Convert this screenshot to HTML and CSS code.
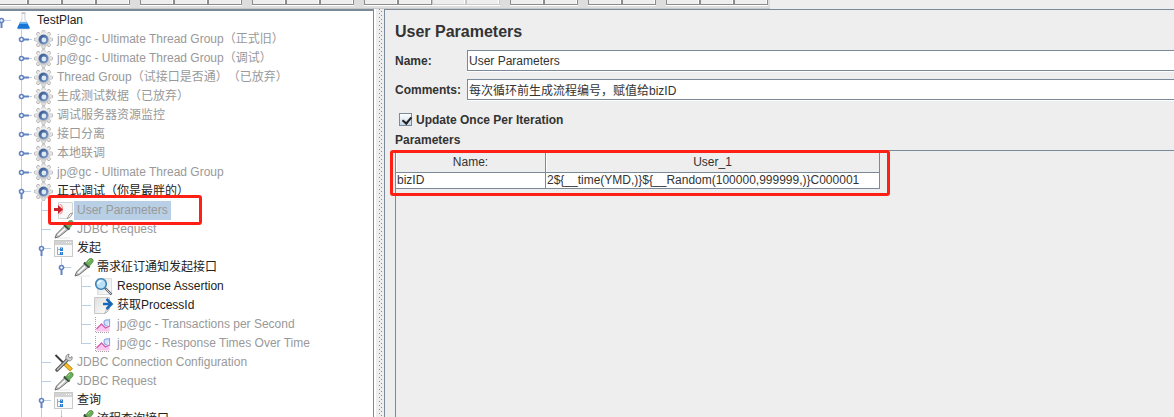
FILE: index.html
```html
<!DOCTYPE html>
<html lang="zh-CN">
<head>
  <meta charset="UTF-8">
  <meta name="viewport" content="width=device-width, initial-scale=1.0">
  <title>User Parameters</title>
  <link rel="stylesheet" href="styles.css">
</head>
<body>
  <!-- icon set -->
  <svg class="sprite" width="0" height="0">
    <defs>
      <linearGradient id="metal" x1="0" y1="0" x2="0" y2="1">
        <stop offset="0" stop-color="#f2f2f2"/><stop offset="1" stop-color="#cccccc"/>
      </linearGradient>
      <linearGradient id="paper" x1="0" y1="0" x2="1" y2="1">
        <stop offset="0" stop-color="#dedede"/><stop offset="1" stop-color="#ffffff"/>
      </linearGradient>
      <linearGradient id="hub" x1="0" y1="0" x2="1" y2="1">
        <stop offset="0" stop-color="#2f528c"/><stop offset="1" stop-color="#7fa0cb"/>
      </linearGradient>
    </defs>
    <symbol id="closed" viewBox="0 0 16 19">
      <path d="M10 9.5h4" stroke="#b8cfe5"/>
      <path d="M6 9.5h5" stroke="#6382bf" stroke-width="2"/>
      <circle cx="3.5" cy="9.5" r="2" fill="#fff" stroke="#6382bf" stroke-width="1.6"/>
    </symbol>
    <symbol id="opened" viewBox="0 0 16 19">
      <path d="M6 9.5h7" stroke="#b8cfe5"/>
      <path d="M3.5 12v5" stroke="#6382bf" stroke-width="2"/>
      <circle cx="3.5" cy="9.5" r="2" fill="#fff" stroke="#6382bf" stroke-width="1.6"/>
    </symbol>
    <symbol id="leaf" viewBox="0 0 16 19">
      <path d="M3 9.5h10" stroke="#b8cfe5"/>
    </symbol>
    <symbol id="flask" viewBox="0 0 20 19">
      <path d="M8 2v6L3.500 16.500q-.5 1.500 1 1.500h10q1.500 0 1-1.500L11 8V2z" fill="#edf1f5" stroke="#c6cbd0" stroke-width=".8"/>
      <path d="M6 11.500h7l2.500 5q.3 1.300-.7 1.300H4.200q-1 0-.7-1.300z" fill="#1675d8"/>
      <path d="M6 11.500h7l.7 1.500H5.300z" fill="#62b2f2"/>
      <path d="M9.200 3v7" stroke="#fff" stroke-width="1.200"/>
      <path d="M7.500 2h4" stroke="#aeb4ba"/>
    </symbol>
    <symbol id="gear" viewBox="0 0 20 19">
      <g stroke="#a6a6a6" stroke-width="4" stroke-linecap="round">
        <path d="M9.500 2v15M2 9.500h15M4.200 4.200l10.600 10.600M14.800 4.200L4.200 14.800"/>
      </g>
      <g stroke="#e6e6e6" stroke-width="2.800" stroke-linecap="round">
        <path d="M9.500 2v15M2 9.500h15M4.200 4.200l10.600 10.600M14.800 4.200L4.200 14.800"/>
      </g>
      <circle cx="9.500" cy="9.500" r="7" fill="url(#metal)"/>
      <circle cx="9.500" cy="9.500" r="5.300" fill="#a9b4c4"/>
      <circle cx="9.500" cy="9.500" r="4.700" fill="url(#hub)"/>
      <circle cx="9.900" cy="10" r="2.400" fill="#dfe9f5"/>
    </symbol>
    <symbol id="param" viewBox="0 0 20 19">
      <path d="M4.500 1.500h14v11l-5 5h-9z" fill="#f8f8f8" stroke="#d4d4d4"/>
      <path d="M18.500 12q-3 .5-3.500 2t-2 3.500q4-.5 5.500-5.500z" fill="#eee" stroke="#888" stroke-width=".8"/>
      <path d="M5.500 3.500q3 0 3 4.500t-3 5" fill="none" stroke="#ef9c9c" stroke-width="1.200"/>
      <path d="M0 7h4V4l5 4.500L4 13v-3H0z" fill="#c9232b"/>
    </symbol>
    <symbol id="dropper" viewBox="0 0 20 19">
      <path d="M3 18h13" stroke="#e6e6e6"/>
      <path d="M10.500 6l3.500 3.500-8.500 7-4.500 1.500 1.500-4z" fill="#c4cac7" stroke="#6c6c6c"/>
      <path d="M4 15l7-6.500" stroke="#fff" stroke-width="1.400"/>
      <path d="M10 4.500l5.500 5" stroke="#35453a" stroke-width="2.200"/>
      <path d="M11.500 5l3.500-4q2-1.500 3.500 0t0 3.500L15 8.500z" fill="#6aad5a" stroke="#4d8743" stroke-width=".7"/>
      <path d="M14 4l2-2" stroke="#a4d494"/>
    </symbol>
    <symbol id="controller" viewBox="0 0 20 19">
      <rect x=".5" y="1.500" width="18" height="16" fill="#fafafa" stroke="#c9c9c9"/>
      <path d="M1 2h17v4H1z" fill="#d2d2d2"/>
      <path d="M12 3.500h1m1 0h1m1 0h1" stroke="#fff"/>
      <path d="M3.500 8v7.500h3M3.500 10.500h3" fill="none" stroke="#9aa7b8"/>
      <path d="M6 8.500h3v3.500H6zM6 13h3v3H6z" fill="#2c7dd0"/>
      <path d="M7 9h1v1H7zm0 4.500h1v1H7z" fill="#9dd0f5"/>
    </symbol>
    <symbol id="lens" viewBox="0 0 20 19">
      <path d="M3.500 1.500h14v16h-14z" fill="url(#paper)" stroke="#ddd"/>
      <path d="M11 11l6.500 6.500" stroke="#5c656e" stroke-width="2.400"/>
      <path d="M12 12l5 5" stroke="#d0d4d8"/>
      <circle cx="7" cy="7" r="5.300" fill="#b8e0f7" stroke="#3a82b5" stroke-width="1.600"/>
      <path d="M4 7q.5-3 3.500-3" fill="none" stroke="#fff" stroke-width="1.500"/>
    </symbol>
    <symbol id="extract" viewBox="0 0 20 19">
      <path d="M.5 1.500h15v11l-5 5H.5z" fill="url(#paper)" stroke="#c8c8c8"/>
      <path d="M15 12q-3 .5-3 2t-1.500 3.500q3-1 4.500-4z" fill="#eee" stroke="#999" stroke-width=".7"/>
      <path d="M9 8h8M12.500 3l5 5-5 5" fill="none" stroke="#1768b8" stroke-width="2.600"/>
    </symbol>
    <symbol id="chart" viewBox="0 0 20 19">
      <path d="M1.500 2v15.500H16" fill="none" stroke="#a5a5a5" stroke-dasharray="1 1"/>
      <path d="M2.500 16.500V14l5-5 4 4 4-2v5.500z" fill="#fac6ee"/>
      <path d="M2.500 14l5-5 4 4 4-2" fill="none" stroke="#cf5cae" stroke-width="1.300"/>
      <path d="M15.500 5q-6-1-5.500 3 .5 3 3.500 3M15.500 4v8" fill="#d3e3fc" stroke="#8aa6e3" stroke-width="1.200"/>
    </symbol>
    <symbol id="tools" viewBox="0 0 20 19">
      <path d="M10 10l7.500 7" stroke="#b98210" stroke-width="4"/>
      <path d="M10.500 10.500l6.500 6" stroke="#f7bd27" stroke-width="2.600"/>
      <path d="M1.500 2l9 9" stroke="#383838" stroke-width="1.800"/>
      <path d="M3 17l11-11" stroke="#555" stroke-width="3.400" stroke-linecap="round"/>
      <path d="M3 17l11-11" stroke="#c4c4c4" stroke-width="1.400"/>
      <path d="M12 6q-1-4 3-5l-.5 3 1.500 1 2-1.500q1 4-3 4.500z" fill="#d5d5d5" stroke="#777" stroke-width=".8"/>
    </symbol>
  </svg>

  <div class="toolbar">
    <div class="group"><button></button><button></button><button></button><button></button></div>
    <div class="group"><button></button><button></button><button></button></div>
    <div class="group"><button></button><button></button><button></button></div>
    <div class="group"><button></button><button></button><button disabled></button><button disabled></button></div>
    <div class="group"><button></button><button></button></div>
    <div class="group"><button></button><button></button></div>
    <div class="group"><button></button><button></button><button></button></div>
  </div>

  <div class="workspace">
    <div class="tree-pane">
      <ul class="tree">
        <li>
          <div class="node"><svg class="handle"><use href="#opened"/></svg><svg class="icon"><use href="#flask"/></svg><span class="text">TestPlan</span></div>
          <ul>
            <li><div class="node off"><svg class="handle"><use href="#closed"/></svg><svg class="icon"><use href="#gear"/></svg><span class="text">jp@gc - Ultimate Thread Group（正式旧）</span></div></li>
            <li><div class="node off"><svg class="handle"><use href="#closed"/></svg><svg class="icon"><use href="#gear"/></svg><span class="text">jp@gc - Ultimate Thread Group（调试）</span></div></li>
            <li><div class="node off"><svg class="handle"><use href="#closed"/></svg><svg class="icon"><use href="#gear"/></svg><span class="text">Thread Group（试接口是否通）（已放弃）</span></div></li>
            <li><div class="node off"><svg class="handle"><use href="#closed"/></svg><svg class="icon"><use href="#gear"/></svg><span class="text">生成测试数据（已放弃）</span></div></li>
            <li><div class="node off"><svg class="handle"><use href="#closed"/></svg><svg class="icon"><use href="#gear"/></svg><span class="text">调试服务器资源监控</span></div></li>
            <li><div class="node off"><svg class="handle"><use href="#closed"/></svg><svg class="icon"><use href="#gear"/></svg><span class="text">接口分离</span></div></li>
            <li><div class="node off"><svg class="handle"><use href="#closed"/></svg><svg class="icon"><use href="#gear"/></svg><span class="text">本地联调</span></div></li>
            <li><div class="node off"><svg class="handle"><use href="#closed"/></svg><svg class="icon"><use href="#gear"/></svg><span class="text">jp@gc - Ultimate Thread Group</span></div></li>
            <li class="more">
              <div class="node"><svg class="handle"><use href="#opened"/></svg><svg class="icon"><use href="#gear"/></svg><span class="text">正式调试（你是最胖的）</span></div>
              <ul>
                <li><div class="node off selected"><svg class="handle"><use href="#leaf"/></svg><svg class="icon"><use href="#param"/></svg><span class="text">User Parameters</span><span class="mark mark-node"></span></div></li>
                <li><div class="node off"><svg class="handle"><use href="#leaf"/></svg><svg class="icon"><use href="#dropper"/></svg><span class="text">JDBC Request</span></div></li>
                <li>
                  <div class="node"><svg class="handle"><use href="#opened"/></svg><svg class="icon"><use href="#controller"/></svg><span class="text">发起</span></div>
                  <ul>
                    <li>
                      <div class="node"><svg class="handle"><use href="#opened"/></svg><svg class="icon"><use href="#dropper"/></svg><span class="text">需求征订通知发起接口</span></div>
                      <ul>
                        <li><div class="node"><svg class="handle"><use href="#leaf"/></svg><svg class="icon"><use href="#lens"/></svg><span class="text">Response Assertion</span></div></li>
                        <li><div class="node"><svg class="handle"><use href="#leaf"/></svg><svg class="icon"><use href="#extract"/></svg><span class="text">获取ProcessId</span></div></li>
                        <li><div class="node off"><svg class="handle"><use href="#leaf"/></svg><svg class="icon"><use href="#chart"/></svg><span class="text">jp@gc - Transactions per Second</span></div></li>
                        <li><div class="node off"><svg class="handle"><use href="#leaf"/></svg><svg class="icon"><use href="#chart"/></svg><span class="text">jp@gc - Response Times Over Time</span></div></li>
                      </ul>
                    </li>
                  </ul>
                </li>
                <li><div class="node off"><svg class="handle"><use href="#leaf"/></svg><svg class="icon"><use href="#tools"/></svg><span class="text">JDBC Connection Configuration</span></div></li>
                <li><div class="node off"><svg class="handle"><use href="#leaf"/></svg><svg class="icon"><use href="#dropper"/></svg><span class="text">JDBC Request</span></div></li>
                <li class="more">
                  <div class="node"><svg class="handle"><use href="#opened"/></svg><svg class="icon"><use href="#controller"/></svg><span class="text">查询</span></div>
                  <ul>
                    <li class="more"><div class="node"><svg class="handle"><use href="#opened"/></svg><svg class="icon"><use href="#dropper"/></svg><span class="text">流程查询接口</span></div></li>
                  </ul>
                </li>
              </ul>
            </li>
          </ul>
        </li>
      </ul>
    </div>

    <div class="splitter"></div>

    <div class="editor">
      <h1>User Parameters</h1>
      <div class="field">
        <label for="name">Name:</label>
        <input type="text" id="name" value="User Parameters">
      </div>
      <div class="field">
        <label for="comments">Comments:</label>
        <input type="text" id="comments" value="每次循环前生成流程编号，赋值给bizID">
      </div>
      <div class="check">
        <input type="checkbox" id="once" checked>
        <label for="once">Update Once Per Iteration</label>
      </div>
      <h2>Parameters</h2>
      <div class="table-area">
        <div class="table-box">
          <table>
            <thead>
              <tr><th class="col-name">Name:</th><th>User_1</th></tr>
            </thead>
            <tbody>
              <tr><td>bizID</td><td>2${__time(YMD,)}${__Random(100000,999999,)}C000001</td></tr>
            </tbody>
          </table>
          <span class="mark mark-table"></span>
        </div>
      </div>
    </div>
  </div>
</body>
</html>
```
FILE: styles.css
```css
* {
  box-sizing: border-box;
}
body {
  margin: 0;
  height: 100vh;
  overflow: hidden;
  display: flex;
  flex-direction: column;
  background: #eeeeee;
  color: #333333;
  font-family: "Liberation Sans", "Noto Sans CJK SC", sans-serif;
  font-size: 12px;
  text-spacing-trim: space-all;
}
ul {
  list-style: none;
  margin: 0;
  padding: 0;
}
.sprite {
  position: absolute;
}

/* toolbar */
.toolbar {
  display: flex;
  align-self: flex-start;
  gap: 10px;
  height: 9px;
  margin-left: -6px;
  padding-right: 2px;
  background: #dddddd;
  border-bottom: 1px solid #c8c8c8;
}
.group {
  display: flex;
}
.toolbar button {
  width: 34px;
  height: 5px;
  padding: 0;
  background: #eeeeee;
  border: 1px solid #8c8c8c;
  border-top: none;
  box-shadow: inset -1px 0 #ffffff, 0 1px #ffffff;
}
.toolbar button:disabled {
  border-color: #c8c8c8;
}

/* layout */
.workspace {
  flex: 1;
  min-height: 0;
  display: flex;
}
.tree-pane {
  flex: 0 0 374px;
  overflow: hidden;
  background: #ffffff;
  border-top: 2px solid #7a8a99;
  border-right: 1px solid #7a8a99;
}
.splitter {
  flex: 0 0 10px;
  padding: 0 2px 0 3px;
  border-left: 2px solid #ffffff;
  background-image:
    conic-gradient(from 270deg at 1px 1px, #7a8a99 90deg, transparent 0),
    conic-gradient(from 270deg at 1px 1px, #7a8a99 90deg, transparent 0);
  background-size: 4px 4px;
  background-position: 0 0, 2px 2px;
  background-origin: content-box;
  background-clip: content-box;
}
.editor {
  flex: 1;
  min-width: 0;
  display: flex;
  flex-direction: column;
  padding: 11px 0 0 10px;
  border-top: 1px solid #7a8a99;
  border-left: 1px solid #7a8a99;
}

/* tree */
.tree {
  margin-left: -2px;
}
.tree ul {
  margin-left: 20px;
}
.tree ul > li {
  background: linear-gradient(#b8cfe5, #b8cfe5) 3px 0 / 1px 100% no-repeat;
}
.tree ul > li:last-child {
  background-size: 1px 10px;
}
.tree ul > li.more {
  background-size: 1px 100%;
}
.node {
  position: relative;
  display: flex;
  height: 19px;
  line-height: 19px;
  white-space: nowrap;
  color: #222222;
}
.handle {
  width: 16px;
  height: 19px;
}
.icon {
  width: 20px;
  height: 19px;
}
.text {
  padding: 0 3px;
}
.off {
  color: #999999;
}
.selected .text {
  background: #b8cfe5;
}

/* red frames */
.mark {
  position: absolute;
  border: 3px solid #ff2015;
  border-radius: 3px;
}
.mark-node {
  left: 10px;
  top: -6px;
  width: 154px;
  height: 30px;
  z-index: 1;
}
.mark-table {
  left: -6px;
  top: -1px;
  right: -10px;
  bottom: -7px;
}

/* editor */
h1 {
  margin: 0 0 7px;
  font-size: 16px;
  line-height: 22px;
}
h2 {
  margin: 0;
  font-size: 12px;
  line-height: 19px;
}
.field {
  display: flex;
  align-items: center;
  margin-bottom: 8px;
}
.field label {
  width: 72px;
  font-weight: bold;
}
.field input {
  flex: 1;
  min-width: 0;
  height: 21px;
  padding: 0 1px;
  border: 1px solid #7a8a99;
  border-right: none;
  border-radius: 0;
  box-shadow: 0 1px #ffffff;
  background: #ffffff;
  color: #333333;
  font-family: inherit;
  font-size: 12px;
}
.check {
  display: flex;
  align-items: center;
  gap: 4px;
  height: 23px;
  padding-left: 4px;
  font-weight: bold;
}
.check input {
  appearance: none;
  width: 13px;
  height: 13px;
  margin: 0;
  border: 1px solid #7a8a99;
  background: linear-gradient(#ffffff, #c5d8eb);
}
.check input:checked::before {
  content: "";
  display: block;
  width: 4px;
  height: 7px;
  margin: 1px 0 0 4px;
  border: solid #222222;
  border-width: 0 2px 2px 0;
  transform: rotate(40deg);
}
.table-area {
  flex: 1;
  border-top: 1px solid #7a8a99;
  border-left: 1px solid #7a8a99;
}
.table-box {
  position: relative;
  width: 484px;
}
table {
  width: 100%;
  table-layout: fixed;
  border-collapse: separate;
  border-spacing: 0;
}
th, td {
  padding: 0 1px;
  border-right: 1px solid #7a8a99;
  border-bottom: 1px solid #7a8a99;
  white-space: nowrap;
}
th {
  height: 22px;
  font-weight: normal;
  box-shadow: inset 1px 1px #ffffff;
}
td {
  height: 16px;
  line-height: 15px;
  background: #ffffff;
}
.col-name {
  width: 150px;
}
```
